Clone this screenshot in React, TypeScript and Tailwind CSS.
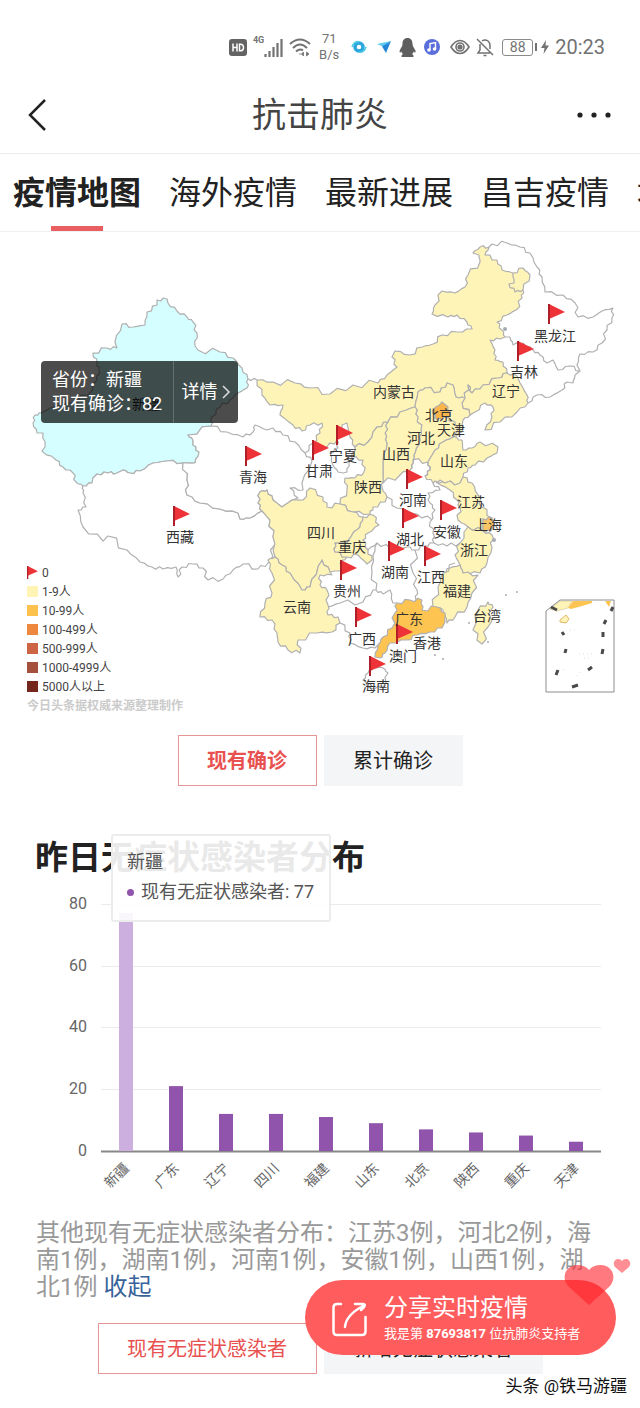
import React, { useState } from "react";

type Point = [number, number];

// 把地图边界的长线段拆成锯齿状的短线段，两个方向结果相同，相邻省份可以共用边界
const split = (a: Point, b: Point): Point[] => {
  const dx = b[0] - a[0];
  const dy = b[1] - a[1];
  if (Math.hypot(dx, dy) < 7) return [a];
  const d = Math.sin((a[0] + b[0]) * 12.9 + (a[1] + b[1]) * 78.2) * 0.14;
  return [
    a,
    [a[0] + dx * 0.35 - dy * d, a[1] + dy * 0.35 + dx * d],
    [a[0] + dx * 0.65 + dy * d, a[1] + dy * 0.65 - dx * d],
  ];
};

const border = (text: string, closed = true) => {
  const points = text
    .trim()
    .split(/\s+/)
    .map((p) => p.split(",").map(Number) as Point);
  const out: Point[] = [];
  const last = closed ? points.length : points.length - 1;
  for (let i = 0; i < last; i++) {
    out.push(...split(points[i], points[(i + 1) % points.length]));
  }
  if (!closed) out.push(points[points.length - 1]);
  return "M" + out.map(([x, y]) => `${x.toFixed(1)} ${y.toFixed(1)}`).join("L") + (closed ? "Z" : "");
};

const regions = [
  // 新疆
  { fill: "#d4feff", d: "157,300 167,299 168,303 177,311 187,317 193,322 197,333 195,346 198,350 220,352 233,358 242,368 248,379 247,388 238,393 230,400 220,407 212,417 211,426 188,435 193,440 193,445 199,452 195,463 183,463 167,461 153,463 140,471 130,473 123,470 117,473 108,473 97,474 93,478 92,483 83,486 76,482 73,473 63,467 56,460 42,451 45,447 43,433 37,433 33,423 35,415 42,413 50,408 70,403 88,395 97,380 99,370 97,363 93,353 107,348 117,348 115,342 122,324 133,327 145,325 147,312 157,305" },
  // 西藏
  { fill: "#fff", d: "83,486 83,493 86,507 78,510 83,527 103,541 108,536 127,550 140,562 152,567 163,569 176,567 178,577 182,567 193,564 203,568 208,580 223,579 233,570 243,564 258,569 268,563 273,557 273,537 270,520 262,511 250,518 240,519 238,513 220,509 200,503 187,495 187,480 183,463 167,461 153,463 140,471 130,473 123,470 117,473 108,473 97,474 93,478 92,483" },
  // 青海
  { fill: "#fff", d: "183,463 195,463 199,452 193,445 193,440 188,435 211,426 227,432 243,437 253,432 255,425 267,430 273,428 283,435 295,442 305,453 312,461 302,483 303,490 290,488 298,498 292,500 282,507 273,500 267,490 260,492 258,503 262,511 250,518 240,519 238,513 220,509 200,503 187,495 187,480" },
  // 内蒙古
  { fill: "#fff4b8", d: "257,380 273,382 295,383 310,388 330,394 353,385 378,383 387,375 397,367 392,357 395,351 410,355 422,347 433,344 442,335 457,332 472,329 467,322 457,315 448,317 432,314 435,305 442,291 455,293 465,287 468,275 480,262 479,255 473,253 480,247 489,247 485,255 497,260 502,270 513,273 523,268 530,275 523,290 522,298 516,310 507,315 497,322 502,330 505,337 500,339 490,340 495,350 495,360 503,362 507,373 498,378 483,385 472,393 468,385 465,398 456,397 453,385 447,383 440,392 425,388 418,392 415,407 400,412 388,422 377,427 368,442 355,447 350,437 347,423 342,425 337,440 327,447 313,443 320,433 322,423 310,425 302,431 293,425 280,415 283,405 270,405 262,395" },
  // 辽宁
  { fill: "#fff4b8", d: "507,373 517,376 520,383 527,395 528,403 517,412 500,422 485,430 492,417 493,407 485,403 475,412 470,415 462,403 465,398 468,385 472,393 483,385 498,378" },
  // 河北
  { fill: "#fff4b8", d: "425,388 440,392 447,383 453,385 456,397 465,398 462,403 470,415 463,420 462,432 453,437 443,442 435,450 428,462 413,460 415,453 420,440 421,430 418,417 415,407 418,392" },
  // 山西
  { fill: "#fff4b8", d: "415,407 418,417 421,430 420,440 415,453 413,460 412,468 400,475 383,483 383,477 383,460 387,443 385,433 388,422 400,412" },
  // 陕西
  { fill: "#fff4b8", d: "388,422 385,433 387,443 383,460 383,477 382,488 387,497 385,502 373,507 370,514 353,512 340,504 347,490 345,478 355,478 364,472 363,460 352,457 355,447 368,442 377,427" },
  // 山东
  { fill: "#fff4b8", d: "435,450 443,442 453,437 462,440 463,450 472,448 480,442 498,447 497,453 487,458 475,465 468,468 463,477 460,483 445,483 440,480 433,483 425,476 430,470 428,462" },
  // 江苏
  { fill: "#fff4b8", d: "436,482 445,483 460,483 463,477 472,483 478,495 482,507 492,518 483,519 483,531 468,527 458,520 460,507 457,500 450,490" },
  // 浙江
  { fill: "#fff4b8", d: "468,527 483,531 492,535 492,547 487,563 480,573 463,573 460,565 455,555 460,543" },
  // 福建
  { fill: "#fff4b8", d: "460,565 463,573 478,575 472,593 467,607 455,617 447,623 443,610 433,607 438,587 443,573 450,568" },
  // 四川
  { fill: "#fff4b8", d: "262,511 258,503 260,492 267,490 273,500 282,507 292,500 303,500 310,488 323,497 327,507 340,504 353,512 363,517 360,527 353,533 347,543 335,543 335,552 347,557 340,563 343,570 330,572 322,560 318,567 310,587 302,590 290,573 282,565 275,557 273,537 270,520" },
  // 重庆
  { fill: "#fff4b8", d: "363,517 373,515 379,525 368,533 363,540 368,550 372,560 367,564 358,555 347,557 335,552 335,543 347,543 353,533 360,527" },
  // 云南
  { fill: "#fff4b8", d: "275,557 268,560 272,573 272,593 265,603 260,617 272,620 277,633 278,642 288,650 300,653 298,640 317,633 332,632 340,623 338,617 328,615 328,605 327,590 320,585 320,575 332,575 330,572 322,560 318,567 310,587 302,590 290,573 282,565" },
  // 台湾
  { fill: "#fff4b8", d: "488,602 493,607 488,627 482,644 473,630 478,610" },
  // 广东
  { fill: "#fec452", d: "397,603 410,600 422,600 422,610 437,607 445,613 445,622 442,628 430,632 417,635 407,640 390,643 385,653 380,658 375,657 378,645 383,637 392,628 395,613" },
  // 北京
  { fill: "#fbb54a", d: "433,410 442,402 448,407 450,415 442,420 435,418" },
  // 上海
  { fill: "#fbc566", d: "483,519 492,518 494,525 491,531 483,531" },
  // 海南
  { fill: "#fff", d: "368,673 373,667 383,668 388,673 383,687 370,688 363,680" },
];

const lines = [
  "248,379 257,380",
  // 黑龙江
  "489,247 492,244 507,243 520,247 530,253 537,267 542,277 545,292 563,295 575,303 578,317 593,317 602,311 613,308 612,318 607,330 602,343 593,352 580,354 577,365 580,371",
  "513,273 514,283 509,284 515,292 523,290",
  // 吉林
  "505,337 510,337 513,345 523,343 533,350 540,355 547,363 553,360 558,370 570,366 580,371 575,375 573,383 567,382 562,390 550,397 537,395 528,403",
  // 甘肃、宁夏
  "313,443 305,453",
  "337,440 338,448 330,453 333,465 338,472 343,473 347,472 349,463 352,457",
  // 河南
  "428,462 430,470 425,476",
  "413,460 412,468",
  "387,497 397,508 417,514 432,520",
  "433,483 440,490 428,493 430,503 435,510 430,522 433,533 434,543",
  // 湖北、湖南
  "368,550 377,543 390,548 407,547 415,550 424,546 434,543 447,546 460,543",
  "415,550 413,573 417,590 416,600",
  "377,543 373,555 372,573 376,590",
  "443,573 455,563",
  // 贵州、广西
  "328,607 340,603 363,602 373,590 376,590 383,594 390,590 393,603 397,603",
  "340,623 350,633 350,643 363,648 375,648 378,645",
  // 天津
  "448,420 455,422 458,430 453,437",
];

const labels: [string, number, number][] = [
  ["黑龙江", 555, 336], ["吉林", 524, 372], ["辽宁", 506, 391], ["内蒙古", 394, 392],
  ["北京", 439, 415], ["天津", 451, 430], ["河北", 421, 438], ["山西", 396, 454],
  ["山东", 454, 461], ["宁夏", 343, 456], ["甘肃", 319, 471], ["陕西", 368, 487],
  ["青海", 253, 477], ["西藏", 180, 537], ["河南", 413, 500], ["江苏", 471, 502],
  ["上海", 488, 525], ["安徽", 447, 532], ["湖北", 410, 539], ["浙江", 474, 550],
  ["四川", 321, 533], ["重庆", 352, 547], ["湖南", 395, 572], ["江西", 431, 577],
  ["福建", 457, 591], ["贵州", 347, 591], ["云南", 297, 607], ["广东", 409, 619],
  ["广西", 362, 639], ["香港", 427, 643], ["澳门", 403, 656], ["海南", 376, 686],
  ["台湾", 487, 616], ["新疆", 146, 404],
];

const flags: Point[] = [
  [548, 304], [517, 341], [336, 425], [312, 440], [245, 446], [173, 506], [406, 469], [402, 508],
  [388, 541], [340, 560], [355, 607], [396, 624], [369, 656], [440, 500], [424, 546],
];

const legend = [
  { label: "1-9人", color: "bg-[#fff4b4]" },
  { label: "10-99人", color: "bg-[#fcc24d]" },
  { label: "100-499人", color: "bg-[#ee883f]" },
  { label: "500-999人", color: "bg-[#cd6446]" },
  { label: "1000-4999人", color: "bg-[#a4503c]" },
  { label: "5000人以上", color: "bg-[#74281d]" },
];

const asymptomatic = [
  { name: "新疆", value: 77 },
  { name: "广东", value: 21 },
  { name: "辽宁", value: 12 },
  { name: "四川", value: 12 },
  { name: "福建", value: 11 },
  { name: "山东", value: 9 },
  { name: "北京", value: 7 },
  { name: "陕西", value: 6 },
  { name: "重庆", value: 5 },
  { name: "天津", value: 3 },
];

const tabs = ["疫情地图", "海外疫情", "最新进展", "昌吉疫情", "地方疫情"];

function Flag() {
  return (
    <>
      <path d="M1 0L17 8L1 15Z" fill="#ee3338" />
      <path d="M0 0H2V20H0Z" fill="#b01f27" />
    </>
  );
}

function StatusBar() {
  return (
    <div className="flex h-20 items-center justify-end pr-[35px] pt-[14px] text-[#727272]">
      <svg width="18" height="17" viewBox="0 0 18 17">
        <rect width="18" height="17" rx="3" fill="#636363" />
        <path d="M4 4.500V12.500M8 4.500V12.500M4 8.500H8M10.500 5.200V11.800H12Q14.500 11.500 14.500 8.500T12 5.200Z" fill="none" stroke="#fff" strokeWidth="1.500" />
      </svg>
      <div className="ml-1.5 flex">
        <span className="-mt-1 text-[9px] font-bold leading-3">4G</span>
        <svg width="19" height="19" viewBox="0 0 19 19" stroke="currentColor" strokeWidth="2.200">
          <path d="M1.500 16V19M5.500 13V19M9.500 9V19M13.500 5V19M17.500 1V19" />
        </svg>
      </div>
      <svg className="ml-1.5" width="22" height="19" viewBox="0 0 22 19" fill="none" stroke="currentColor" strokeWidth="2">
        <path d="M1 6Q11-3 21 6M4 10Q11 3 18 10M7 13.500Q11 10 14 12.500" />
        <path d="M10 16H12.500M14.500 14V18L12.500 16ZM17.500 14V18L20 16Z" fill="currentColor" strokeWidth="0.800" />
      </svg>
      <div className="ml-1.5 w-6 text-center text-[13px] leading-4">
        71
        <br />
        B/s
      </div>
      <svg className="ml-2.5" width="16" height="16" viewBox="0 0 16 16">
        <circle cx="8" cy="8" r="4" fill="none" stroke="#2ca6dc" strokeWidth="3.500" />
        <path d="M1 8Q3 2 8 3M15 8Q13 14 8 13" fill="none" stroke="#48cbe6" strokeWidth="1.500" />
      </svg>
      <svg className="ml-2.5" width="14" height="14" viewBox="0 0 14 14">
        <path d="M0 4L14 1L6 6.500Z" fill="#5cc9ee" />
        <path d="M14 1L9 13L5 6.500Z" fill="#2586d8" />
      </svg>
      <svg className="ml-2" width="17" height="19" viewBox="0 0 16 19" fill="#5f5f5f">
        <path d="M8 0C4.500 0 3 2.500 3 6Q3 8 1.500 10T0 14Q.5 15 2 13.500Q2 15 3.500 16Q1.500 17 2 19H14Q14.500 17 12.500 16Q14 15 14 13.500Q15.500 15 16 14T14.500 10Q13 8 13 6C13 2.500 11.500 0 8 0Z" />
      </svg>
      <svg className="ml-2" width="16" height="16" viewBox="0 0 16 16">
        <circle cx="8" cy="8" r="8" fill="#5b6fdb" />
        <path d="M6 11V4.500L11.500 3.500V10" fill="none" stroke="#fff" strokeWidth="1.400" />
        <circle cx="5" cy="11" r="1.800" fill="#fff" />
        <circle cx="10.500" cy="10" r="1.800" fill="#fff" />
      </svg>
      <svg className="ml-2.5" width="20" height="16" viewBox="0 0 20 16" fill="none" stroke="currentColor" strokeWidth="1.600">
        <path d="M1 8Q5 1.500 10 1.500T19 8Q15 14.500 10 14.500T1 8Z" />
        <circle cx="10" cy="8" r="4" />
        <circle cx="10" cy="8" r="1.800" fill="currentColor" />
      </svg>
      <svg className="ml-1.5" width="18" height="19" viewBox="0 0 18 19" fill="none" stroke="currentColor" strokeWidth="1.500">
        <path d="M6 3Q9 1 12 3Q14 4.500 14 8V11M4 6V12L2 15H14M1 1L17 17M7.500 17.500H10.500" />
      </svg>
      <div className="ml-2 flex items-center">
        <span className="flex h-[17px] w-[31px] items-center justify-center rounded-[3px] border border-[#8a8a8a] text-sm leading-4">88</span>
        <span className="ml-0.5 h-2 w-0.5 bg-[#727272]" />
      </div>
      <svg className="ml-1" width="8" height="14" viewBox="0 0 8 14" fill="currentColor">
        <path d="M5 0L0 8H3.500L2.500 14L8 5.500H4.500Z" />
      </svg>
      <span className="ml-1.5 text-xl">20:23</span>
    </div>
  );
}

function EpidemicMap() {
  return (
    <section className="relative">
      <svg className="block w-full" viewBox="0 232 640 488">
        <g stroke="#b0b0b0" strokeWidth="1.200" strokeLinejoin="round">
          {regions.map((r) => (
            <path key={r.d} d={border(r.d)} fill={r.fill} />
          ))}
          {lines.map((l) => (
            <path key={l} d={border(l, false)} fill="none" />
          ))}
        </g>
        <g fill="#a5aab5">
          <circle cx="506" cy="595" r="1" />
          <circle cx="517" cy="592" r="1" />
          <circle cx="469" cy="623" r="1" />
          <circle cx="488" cy="642" r="1" />
          <circle cx="435" cy="655" r="1" />
          <circle cx="443" cy="659" r="1" />
          <circle cx="494" cy="540" r="2" />
          <circle cx="505" cy="329" r="2" />
        </g>
        {/* 南海诸岛 */}
        <path d="M550 609L560 601H572L568 608L557 611Z" fill="#fff4b8" stroke="#c9b98a" strokeWidth="0.500" />
        <path d="M568 608L573 601H592V603L582 606L571 609Z" fill="#fec452" />
        <path d="M560 620L566 615L569 619L566 623L560 622Z" fill="#fff4b8" stroke="#e2b765" />
        <path d="M605 601H611L609 607Z" fill="#fec452" />
        <path d="M546 611L560 600H614V692H546Z" fill="none" stroke="#8d8d8d" />
        <path d="M551 607L557 610M606 620L604 624M603 632V637M603 649L602 654M592 667L588 670M578 685L572 687M558 670L556 675M566 649L565 653M562 632L564 635M613 607L611 611" stroke="#4a4a4a" strokeWidth="3" />
        <path d="M570 630H577M579 654H593M584 658H590M563 670L567 669M577 676L580 672" stroke="#ddd" strokeDasharray="1 3" />
        <g>
          {flags.map(([x, y]) => (
            <g key={`${x}-${y}`} transform={`translate(${x} ${y})`}>
              <Flag />
            </g>
          ))}
        </g>
        <g fill="#333" fontSize="14" textAnchor="middle">
          {labels.map(([name, x, y]) => (
            <text key={name} x={x} y={y + 5}>
              {name}
            </text>
          ))}
        </g>
      </svg>

      {/* 选中省份 */}
      <div className="absolute left-[41px] top-[129px] flex h-[62px] w-[197px] items-center rounded bg-black/70 text-lg leading-6 text-white">
        <p className="w-[132px] whitespace-nowrap pl-[11px]">
          省份：新疆
          <br />
          现有确诊：82
        </p>
        <button className="flex h-full flex-1 items-center justify-center gap-1 border-l border-white/20">
          详情
          <svg width="9" height="14" viewBox="0 0 9 14" fill="none" stroke="#ddd" strokeWidth="1.500">
            <path d="M1 1L7 7L1 13" />
          </svg>
        </button>
      </div>

      {/* 图例 */}
      <div className="absolute bottom-1 left-[27px] text-xs text-[#444]">
        <ul>
          <li className="flex h-[19px] items-center gap-1">
            <svg width="11" height="13" viewBox="0 0 17 20">
              <Flag />
            </svg>
            0
          </li>
          {legend.map((l) => (
            <li key={l.label} className="flex h-[19px] items-center gap-1">
              <span className={`h-[11px] w-[11px] ${l.color}`} />
              {l.label}
            </li>
          ))}
        </ul>
        <p className="font-bold leading-5 text-[#cbcbcb]">今日头条据权威来源整理制作</p>
      </div>
    </section>
  );
}

function AsymptomaticChart() {
  const base = 1151;
  const unit = 3.09;

  return (
    <section className="relative">
      <h2 className="px-[35px] text-[33px] font-bold leading-[48px] text-[#222]">昨日无症状感染者分布</h2>
      <svg className="block w-full" viewBox="0 882 640 328">
        {[80, 60, 40, 20, 0].map((v) => (
          <g key={v}>
            <path
              d={`M101 ${Math.round(base - v * unit) + 0.5}H601`}
              stroke={v === 0 ? "#888" : "#ebebeb"}
              strokeWidth={v === 0 ? 2 : 1}
            />
            <text x="87" y={Math.round(base - v * unit) + 5} fontSize="16" textAnchor="end" fill="#666">
              {v}
            </text>
          </g>
        ))}
        {asymptomatic.map((item, i) => (
          <g key={item.name}>
            <rect
              x={119 + i * 50}
              y={base - item.value * unit}
              width="14"
              height={item.value * unit}
              fill={i === 0 ? "#ccaedf" : "#9154ac"}
            />
            <text
              transform={`translate(${130 + i * 50} 1169) rotate(-45)`}
              fontSize="14"
              textAnchor="end"
              fill="#666"
            >
              {item.name}
            </text>
          </g>
        ))}
      </svg>
      <div className="absolute left-[111px] top-0 h-[88px] w-[220px] rounded-[3px] border-2 border-[#ececec] bg-white/90 px-[14px] py-[11px] text-lg leading-[30px] text-[#555]">
        <p>新疆</p>
        <p className="flex items-center whitespace-nowrap">
          <span className="mr-[7px] h-[7px] w-[7px] rounded-full bg-[#9154ac]" />
          现有无症状感染者: 77
        </p>
      </div>
    </section>
  );
}

function Choice({ items, className, strong }: { items: string[]; className: string; strong?: boolean }) {
  const [active, setActive] = useState<number>(0);

  return (
    <div className="flex justify-center gap-[7px] whitespace-nowrap text-xl">
      {items.map((item, i) => (
        <button
          key={item}
          onClick={() => setActive(i)}
          className={`h-[51px] ${className} ${
            active === i
              ? `border border-[#e59595] bg-white text-[#e8514f] ${strong ? "font-bold" : ""}`
              : "bg-[#f4f5f7] text-[#222]"
          }`}
        >
          {item}
        </button>
      ))}
    </div>
  );
}

function ShareButton() {
  return (
    <button className="absolute bottom-[53px] right-6 flex h-[75px] w-[311px] items-center rounded-full bg-[#ff5c5e] pl-[27px] pt-1 text-left text-white">
      <svg width="35" height="35" viewBox="0 0 35 35" fill="none" stroke="#fff" strokeWidth="2.500" strokeLinecap="round" strokeLinejoin="round">
        <path d="M9 2H5Q1.500 2 1.500 5.500V29.500Q1.500 33 5 33H30Q33.500 33 33.500 29.500V15" />
        <path d="M13 25Q14 13 31 4M23 2H31Q34 2 32 5L29 8" />
      </svg>
      <span className="ml-[17px] whitespace-nowrap">
        <span className="block text-2xl leading-7">分享实时疫情</span>
        <span className="block text-[13px] leading-6">
          我是第 <b>87693817</b> 位抗肺炎支持者
        </span>
      </span>
      <svg className="absolute -right-[15px] -top-[22px]" width="70" height="52" viewBox="0 0 70 52" fill="#ff1f2a">
        <path d="M28 47L8 29C-1 20 5 7 16 7Q24 7 28 12Q32 7 40 7C51 7 57 20 48 29Z" opacity="0.600" />
        <path d="M61 15L54 9C51 5 54 1 57 1Q60 1 61 3Q62 1 65 1C68 1 71 5 68 9Z" opacity="0.500" />
      </svg>
    </button>
  );
}

function App() {
  const [tab, setTab] = useState<number>(0);

  return (
    <main
      lang="zh-CN"
      className="relative overflow-hidden bg-white pb-[34px] font-[Roboto,'Noto_Sans_CJK_SC',sans-serif]"
    >
      <StatusBar />

      <header className="flex h-[74px] items-center justify-between border-b border-[#ededed] px-7 pb-1">
        <button aria-label="返回" className="w-10">
          <svg width="19" height="34" viewBox="0 0 19 34" fill="none" stroke="#222" strokeWidth="2.500">
            <path d="M17 2L2 17L17 32" />
          </svg>
        </button>
        <h1 className="text-[34px] leading-[48px] text-[#444]">抗击肺炎</h1>
        <button aria-label="更多" className="flex w-10 justify-end">
          <svg width="36" height="8" viewBox="0 0 36 8" fill="#222">
            <circle cx="4" cy="4" r="2.600" />
            <circle cx="18" cy="4" r="2.600" />
            <circle cx="32" cy="4" r="2.600" />
          </svg>
        </button>
      </header>

      <nav className="flex h-[78px] gap-7 overflow-hidden whitespace-nowrap border-b border-[#f0f0f0] pl-[13px] text-[32px] text-[#222]">
        {tabs.map((t, i) => (
          <button
            key={t}
            onClick={() => setTab(i)}
            className={`relative h-full shrink-0 ${tab === i ? "font-bold" : ""}`}
          >
            {t}
            {tab === i && <span className="absolute bottom-0 left-1/2 h-[5px] w-[52px] -translate-x-1/2 bg-[#e95f60]" />}
          </button>
        ))}
      </nav>

      <EpidemicMap />

      <div className="mb-12 mt-[15px]">
        <Choice items={["现有确诊", "累计确诊"]} className="w-[139px]" strong />
      </div>

      <AsymptomaticChart />

      <p className="mb-[22px] mt-2.5 px-9 text-2xl leading-[27px] text-[#999]">
        其他现有无症状感染者分布：江苏3例，河北2例，海南1例，湖南1例，河南1例，安徽1例，山西1例，湖北1例{" "}
        <button className="text-[#37639a]">收起</button>
      </p>

      <Choice items={["现有无症状感染者", "新增无症状感染者"]} className="w-[219px]" />

      <ShareButton />

      <p className="absolute bottom-2 right-[13px] text-[17px] leading-7 text-[#111] [text-shadow:1px_1px_1px_#fff]">
        头条 @铁马游疆
      </p>
    </main>
  );
}

export default App;
